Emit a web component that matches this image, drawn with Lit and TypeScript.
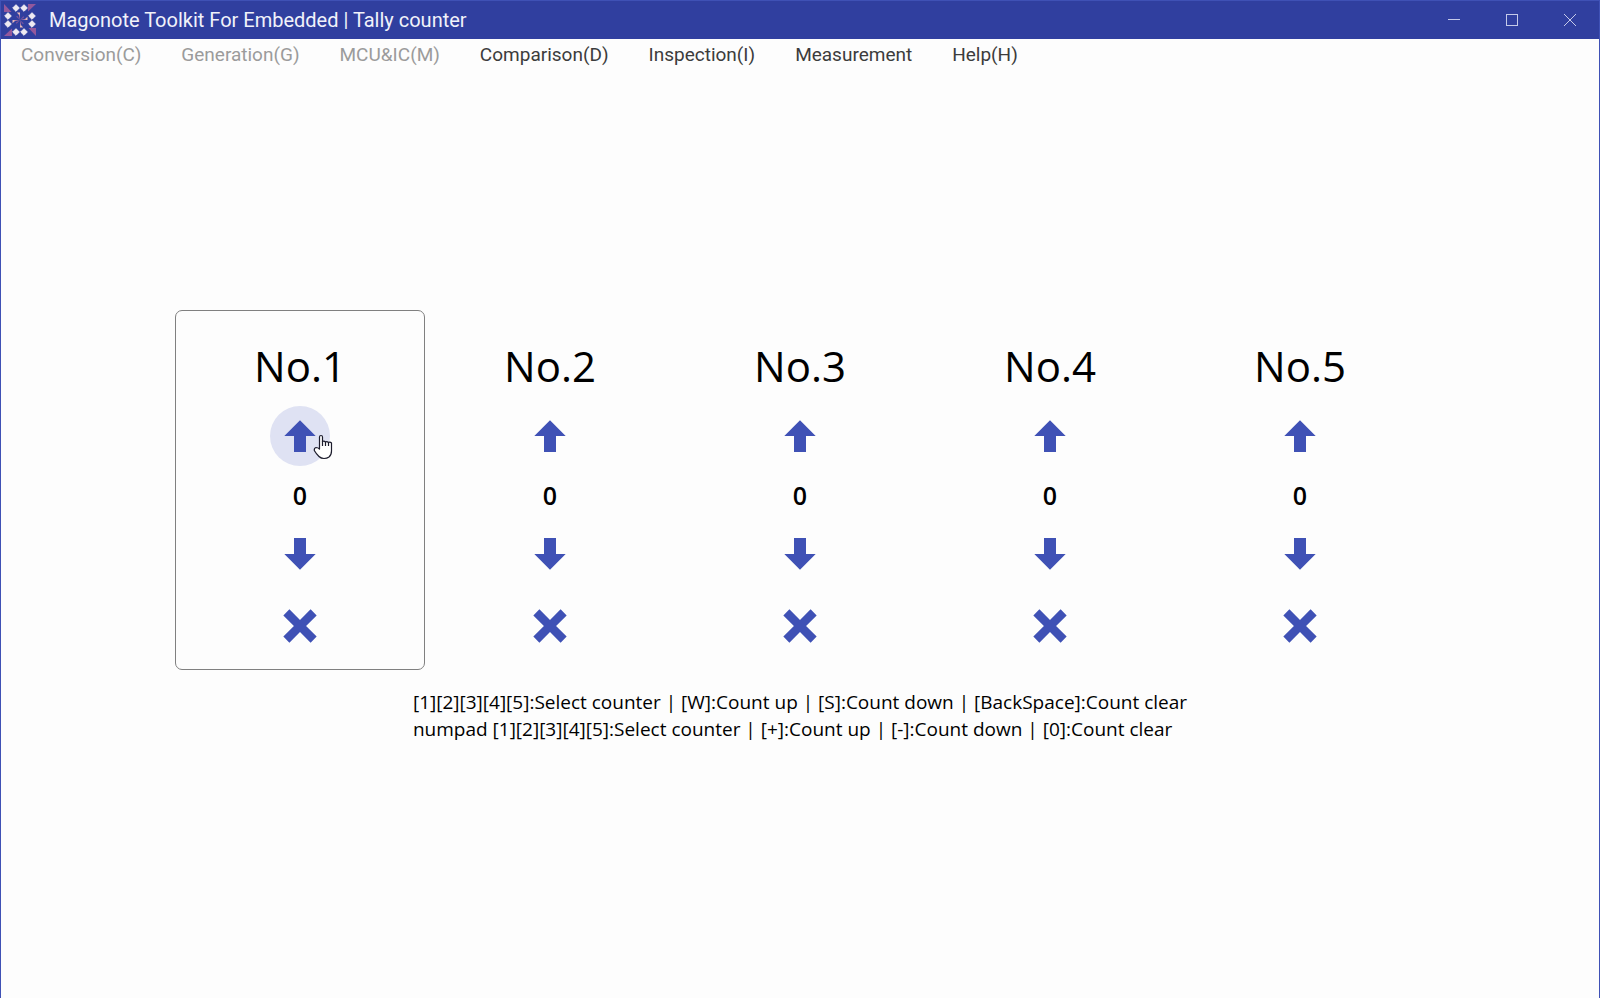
import { LitElement, html, css, svg, nothing } from "lit";
import { customElement, state } from "lit/decorators.js";

const ARROW_UP = "M15,20H9V12H4.16L12,4.16L19.84,12H15V20Z";
const ARROW_DOWN = "M9,4H15V12H19.84L12,19.84L4.16,12H9V4Z";
const CLEAR =
  "M20 6.91L17.09 4L12 9.09L6.91 4L4 6.91L9.09 12L4 17.09L6.91 20L12 14.91L17.09 20L20 17.09L14.91 12L20 6.91Z";

const glyph = (d: string) => html`
  <svg class="glyph" viewBox="0 0 24 24" aria-hidden="true"><path d=${d}></path></svg>
`;

// One quarter of the logo; the other three are rotated copies.
const quarter = (angle: number) => svg`
  <g transform="rotate(${angle} 16 16)">
    <path d="M0 0V8H7.500Z" fill="#93589c"></path>
    <path d="M12 .7L15.300 4L12 7.300L8.700 4ZM20 .7L23.300 4L20 7.300L16.700 4Z"
      fill="#eeeaf2" stroke="#eeeaf2" stroke-width="1" stroke-linejoin="round"></path>
    <path d="M12.800 8.500H16V12Z" fill="#e6b9b8"></path>
    <path d="M15 11L16 10V16Z" fill="#b67fa6"></path>
    <path d="M12 12.500L13.500 12L16 16Z" fill="#7d549f"></path>
  </g>
`;

@customElement("title-bar")
class TitleBar extends LitElement {
  static styles = css`
    :host {
      display: flex;
      align-items: center;
      height: 38px;
      box-sizing: border-box;
      padding-left: 3px;
      background: #303f9f;
      color: #f1f2fa;
      font-family: Roboto, "Liberation Sans", sans-serif;
    }
    .logo {
      width: 32px;
      height: 32px;
    }
    .title {
      flex: 1;
      margin: 0 0 0 13px;
      font-size: 20px;
      line-height: 24px;
      font-weight: 400;
    }
    .control {
      width: 58px;
      height: 38px;
      padding: 0;
      border: 0;
      background: none;
      display: grid;
      place-items: center;
    }
    .control svg {
      width: 12px;
      height: 12px;
      fill: none;
      stroke: #c5cae9;
      shape-rendering: crispEdges;
    }
  `;

  render() {
    return html`
      <svg class="logo" viewBox="0 0 32 32" aria-hidden="true">
        ${[0, 90, 180, 270].map(quarter)}
      </svg>
      <h1 class="title">Magonote Toolkit For Embedded | Tally counter</h1>
      <button class="control" aria-label="Minimize">
        <svg viewBox="0 0 12 12"><path d="M0 5.500H12"></path></svg>
      </button>
      <button class="control" aria-label="Maximize">
        <svg viewBox="0 0 12 12"><path d="M.5.5H11.500V11.500H.5Z"></path></svg>
      </button>
      <button class="control" aria-label="Close">
        <svg viewBox="0 0 12 12"><path d="M0 0L12 12M12 0L0 12"></path></svg>
      </button>
    `;
  }
}

@customElement("menu-bar")
class MenuBar extends LitElement {
  static styles = css`
    :host {
      display: block;
      font-family: Roboto, "Liberation Sans", sans-serif;
    }
    .menu {
      display: flex;
      gap: 40px;
      padding: 4px 20px;
    }
    .item {
      padding: 0;
      border: 0;
      background: none;
      font: inherit;
      font-size: 19px;
      line-height: 24px;
      color: #3c3c3c;
    }
    .item:disabled {
      color: #9b9b9b;
    }
  `;

  private items = [
    { label: "Conversion(C)", disabled: true },
    { label: "Generation(G)", disabled: true },
    { label: "MCU&IC(M)", disabled: true },
    { label: "Comparison(D)", disabled: false },
    { label: "Inspection(I)", disabled: false },
    { label: "Measurement", disabled: false },
    { label: "Help(H)", disabled: false },
  ];

  render() {
    return html`
      <nav class="menu">
        ${this.items.map(
          (item) => html`<button class="item" ?disabled=${item.disabled}>${item.label}</button>`
        )}
      </nav>
    `;
  }
}

@customElement("app-root")
class AppRoot extends LitElement {
  static styles = css`
    :host {
      display: flex;
      flex-direction: column;
      box-sizing: border-box;
      min-height: 100vh;
      border: 1px solid #3f51b5;
      border-bottom: 0;
      background: #fdfdfd;
      color: #000;
      font-family: "Open Sans", "Noto Sans", sans-serif;
    }
    .board {
      flex: 1;
      display: flex;
      flex-direction: column;
      align-items: center;
      justify-content: center;
      padding-bottom: 17px;
    }
    .counters {
      display: grid;
      grid-template-columns: repeat(5, 250px);
    }
    .counter {
      display: flex;
      flex-direction: column;
      align-items: center;
      padding: 25px 0 13px;
      border: 1px solid transparent;
      border-radius: 7px;
    }
    .counter.selected {
      border-color: #808080;
    }
    .name {
      margin: 0 0 10px;
      font-size: 42px;
      line-height: 60px;
      font-weight: 400;
    }
    .value {
      font-size: 25px;
      line-height: 58px;
      font-weight: 600;
    }
    .action {
      position: relative;
      display: grid;
      place-content: center;
      width: 60px;
      height: 60px;
      padding: 0;
      border: 0;
      border-radius: 50%;
      background: none;
      color: #3f51b5;
    }
    .action.hovered {
      background: #dfe2f3;
    }
    .action.clear {
      margin-top: 12px;
    }
    .glyph {
      display: block;
      width: 48px;
      height: 48px;
      fill: currentColor;
    }
    .clear .glyph {
      width: 50px;
      height: 50px;
    }
    .pointer {
      position: absolute;
      left: 43px;
      top: 28px;
      width: 20px;
      height: 26px;
    }
    .keys {
      margin: 19px 0 0;
      font-size: 19px;
      line-height: 27px;
    }
  `;

  @state() private counts = [0, 0, 0, 0, 0];
  @state() private selected = 0;

  private change(index: number, next: number) {
    this.selected = index;
    this.counts = this.counts.map((count, i) => (i === index ? next : count));
  }

  private pointer() {
    return html`
      <svg class="pointer" viewBox="0 0 20 26" aria-hidden="true">
        <path
          d="M6.500 15V3Q6.500 1.500 8 1.500T9.500 3V7.500Q11 6.500 12.500 8Q14 7.200 15.500 8.500Q17 7.500 18.500 9V17Q18.500 21 16 23Q14 24.500 11 24.500Q8 24.500 6 22.500Q3 19.500 1.300 16.500Q1 14 3 13.500Q5 13.500 6.500 15Z"
          fill="#fff"
          stroke="#1c1c2c"
          stroke-width="1.2"
          stroke-linejoin="round"
        ></path>
        <path d="M9.500 7V12M12.500 8V12M15.500 8.500V12" fill="none" stroke="#1c1c2c" stroke-width="1.2"></path>
      </svg>
    `;
  }

  render() {
    return html`
      <title-bar></title-bar>
      <menu-bar></menu-bar>
      <main class="board">
        <div class="counters">
          ${this.counts.map(
            (count, i) => html`
              <section class="counter ${i === this.selected ? "selected" : ""}">
                <h2 class="name">No.${i + 1}</h2>
                <button
                  class="action ${i === 0 ? "hovered" : ""}"
                  aria-label="Count up"
                  @click=${() => this.change(i, count + 1)}
                >
                  ${glyph(ARROW_UP)} ${i === 0 ? this.pointer() : nothing}
                </button>
                <output class="value">${count}</output>
                <button class="action" aria-label="Count down" @click=${() => this.change(i, count - 1)}>
                  ${glyph(ARROW_DOWN)}
                </button>
                <button class="action clear" aria-label="Count clear" @click=${() => this.change(i, 0)}>
                  ${glyph(CLEAR)}
                </button>
              </section>
            `
          )}
        </div>
        <p class="keys">
          [1][2][3][4][5]:Select counter | [W]:Count up | [S]:Count down | [BackSpace]:Count clear<br />
          numpad [1][2][3][4][5]:Select counter | [+]:Count up | [-]:Count down | [0]:Count clear
        </p>
      </main>
    `;
  }
}
